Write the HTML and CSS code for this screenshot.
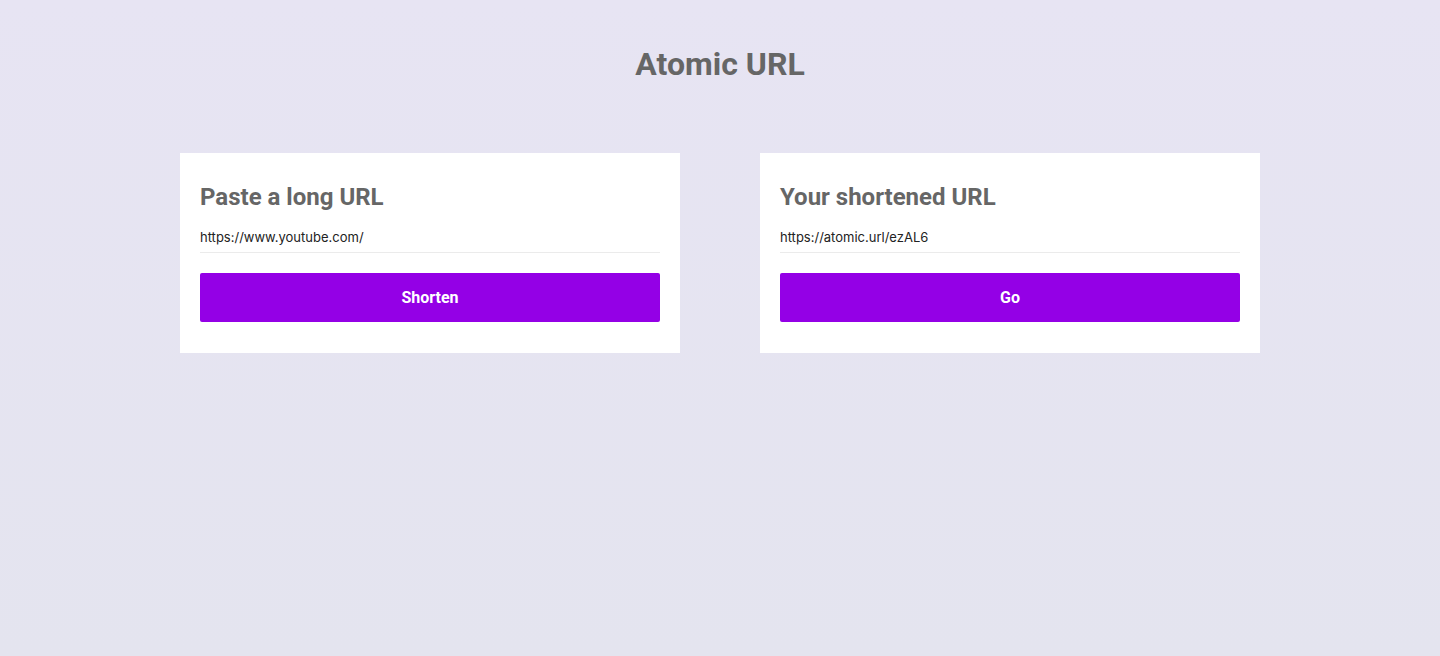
FILE: index.html
```html
<!DOCTYPE html>
<html lang="en">
<head>
<meta charset="utf-8">
<title>Atomic URL</title>
<link rel="stylesheet" href="styles.css">
</head>
<body>
<main class="page">
  <h1 class="title">Atomic URL</h1>
  <div class="cards">
    <section class="card">
      <h2 class="card-title">Paste a long URL</h2>
      <input class="field" type="text" value="https://www.youtube.com/">
      <button class="btn">Shorten</button>
    </section>
    <section class="card">
      <h2 class="card-title">Your shortened URL</h2>
      <input class="field" type="text" value="https://atomic.url/ezAL6">
      <button class="btn">Go</button>
    </section>
  </div>
</main>
</body>
</html>
```

FILE: styles.css
```css
html, body {
  margin: 0;
  height: 100%;
}
body {
  background: linear-gradient(180deg, #e7e4f3 0%, #e4e4ef 100%);
  font-family: Roboto, "Liberation Sans", sans-serif;
}
.page {
  display: flex;
  flex-direction: column;
  align-items: center;
  padding-top: 44px;
}
.title {
  margin: 0;
  font-size: 32px;
  line-height: 40px;
  font-weight: 700;
  color: #666666;
}
.cards {
  display: flex;
  gap: 80px;
  margin-top: 69px;
}
.card {
  width: 500px;
  box-sizing: border-box;
  background: #ffffff;
  padding: 30px 20px 31px;
  display: flex;
  flex-direction: column;
}
.card-title {
  margin: 0;
  font-size: 24px;
  line-height: 28px;
  font-weight: 700;
  color: #666666;
}
.field {
  margin-top: 12px;
  border: none;
  border-bottom: 1px solid #ebebeb;
  padding: 4px 0 5px;
  font-family: Inter, "Noto Sans", sans-serif;
  font-size: 13px;
  line-height: 20px;
  color: #222222;
  outline: none;
  background: transparent;
}
.btn {
  margin-top: 20px;
  height: 49px;
  border: none;
  border-radius: 2px;
  background: #9400e6;
  color: #ffffff;
  font-family: Roboto, "Liberation Sans", sans-serif;
  font-size: 16px;
  font-weight: 700;
  cursor: pointer;
}
```
